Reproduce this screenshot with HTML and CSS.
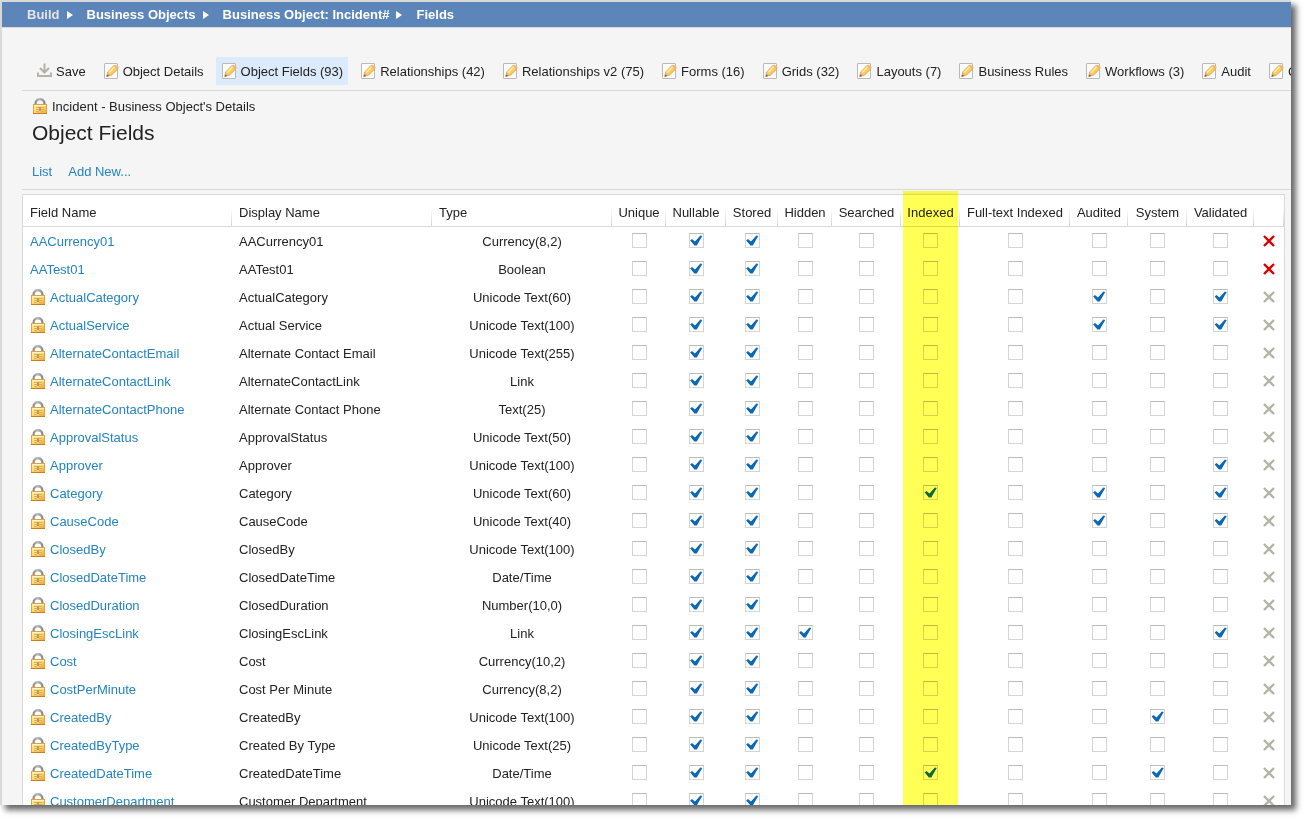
FILE: index.html
```html
<!DOCTYPE html>
<html lang="en">
<head>
    <meta charset="UTF-8">
    <meta name="viewport" content="width=device-width, initial-scale=1.0">
    <title>Business Object: Incident# - Fields</title>
    <link rel="stylesheet" href="styles.css">
</head>
<body>
    <!-- Shared icons -->
    <svg class="icon-defs" width="0" height="0" aria-hidden="true">
        <defs>
            <linearGradient id="brass" x1="0" y1="0" x2="1" y2="1">
                <stop offset="0" stop-color="#fff0a8"/>
                <stop offset="0.5" stop-color="#fcd871"/>
                <stop offset="1" stop-color="#eba63a"/>
            </linearGradient>
            <linearGradient id="steel" x1="0" y1="0" x2="1" y2="0">
                <stop offset="0" stop-color="#8e8e8e"/>
                <stop offset="0.4" stop-color="#bdbdbd"/>
                <stop offset="1" stop-color="#8a8a8a"/>
            </linearGradient>
        </defs>
        <symbol id="icon-save" viewBox="0 0 15 16">
            <path d="M7.5 0.5V10M3 5L7.5 9.5L12 5" fill="none" stroke="#b3b3a6" stroke-width="2"/>
            <path d="M1 9.5V13H14V9.5" fill="none" stroke="#b3b3a6" stroke-width="2"/>
        </symbol>
        <symbol id="icon-edit" viewBox="0 0 15 16">
            <rect x="0.5" y="0.5" width="13" height="15" rx="0.5" fill="#fbfbfb" stroke="#b9b9b9"/>
            <path d="M2.8 13.4L3.6 9.2L9.8 2.6L14 5.8L7.4 12.2Z" fill="#fbcb5c" stroke="#d59a4c" stroke-width="0.8"/>
            <path d="M5 9.6L10.8 3.7" stroke="#ffeb99" stroke-width="1.8"/>
            <path d="M3 13.3L3.6 9.7L6.9 12.2Z" fill="#e5b583"/>
            <path d="M2.5 13.8L3.2 11.4L5.2 12.9Z" fill="#6e5a46"/>
            <path d="M9.8 2.8L11.3 1.5L14.9 4.3L13.7 6Z" fill="#f2b673"/>
        </symbol>
        <symbol id="icon-lock" viewBox="0 0 14 16">
            <path d="M2.6 7.5V5.5C2.6 -0.2 11.4 -0.2 11.4 5.5V7.5" fill="none" stroke="url(#steel)" stroke-width="2.4"/>
            <rect x="0.5" y="6.5" width="13" height="9" fill="url(#brass)" stroke="#dfa047"/>
            <path d="M1 7.5H13" stroke="#fff3c0"/>
            <path d="M3 9.5H6M3 11.5H6M3 13.5H6M8 9.5H11M8 11.5H11M8 13.5H11" stroke="#e8b04c"/>
            <path d="M7 9V13" stroke="#8f856a" stroke-width="1.4"/>
            <path d="M0 15.5H14" stroke="#cc7b21"/>
        </symbol>
        <symbol id="icon-delete" viewBox="0 0 12 12">
            <path d="M1 1L11 11M11 1L1 11" fill="none" stroke="currentColor" stroke-width="2.4"/>
        </symbol>
    </svg>

    <div class="window">
        <nav class="breadcrumb" aria-label="Breadcrumb">
            <a class="root" href="#">Build</a>
            <a href="#">Business Objects</a>
            <a href="#">Business Object: Incident#</a>
            <a href="#">Fields</a>
        </nav>

        <main class="content">
            <div class="toolbar">
                <button type="button"><svg class="icon"><use href="#icon-save"/></svg>Save</button>
                <button type="button"><svg class="icon"><use href="#icon-edit"/></svg>Object Details</button>
                <button type="button" class="active"><svg class="icon"><use href="#icon-edit"/></svg>Object Fields (93)</button>
                <button type="button"><svg class="icon"><use href="#icon-edit"/></svg>Relationships (42)</button>
                <button type="button"><svg class="icon"><use href="#icon-edit"/></svg>Relationships v2 (75)</button>
                <button type="button"><svg class="icon"><use href="#icon-edit"/></svg>Forms (16)</button>
                <button type="button"><svg class="icon"><use href="#icon-edit"/></svg>Grids (32)</button>
                <button type="button"><svg class="icon"><use href="#icon-edit"/></svg>Layouts (7)</button>
                <button type="button"><svg class="icon"><use href="#icon-edit"/></svg>Business Rules</button>
                <button type="button"><svg class="icon"><use href="#icon-edit"/></svg>Workflows (3)</button>
                <button type="button"><svg class="icon"><use href="#icon-edit"/></svg>Audit</button>
                <button type="button"><svg class="icon"><use href="#icon-edit"/></svg>C</button>
            </div>

            <header class="page-header">
                <div class="object-name"><svg class="lock"><use href="#icon-lock"/></svg>Incident - Business Object's Details</div>
                <h1>Object Fields</h1>
                <div class="links">
                    <a href="#">List</a>
                    <a href="#">Add New...</a>
                </div>
            </header>

            <table class="fields">
                <colgroup>
                    <col>
                    <col class="col-display">
                    <col class="col-type">
                    <col class="col-unique">
                    <col class="col-nullable">
                    <col class="col-stored">
                    <col class="col-hidden">
                    <col class="col-searched">
                    <col class="col-indexed">
                    <col class="col-fulltext">
                    <col class="col-audited">
                    <col class="col-system">
                    <col class="col-validated">
                    <col class="col-delete">
                </colgroup>
                <thead>
                    <tr>
                        <th>Field Name</th>
                        <th>Display Name</th>
                        <th>Type</th>
                        <th class="flag">Unique</th>
                        <th class="flag">Nullable</th>
                        <th class="flag">Stored</th>
                        <th class="flag">Hidden</th>
                        <th class="flag">Searched</th>
                        <th class="flag highlight">Indexed</th>
                        <th class="flag">Full-text Indexed</th>
                        <th class="flag">Audited</th>
                        <th class="flag">System</th>
                        <th class="flag">Validated</th>
                        <th class="flag"></th>
                    </tr>
                </thead>
                <tbody id="fieldRows"></tbody>
            </table>
        </main>
    </div>

    <script>
        var flags = ['Unique', 'Nullable', 'Stored', 'Hidden', 'Searched', 'Indexed', 'Full-text Indexed', 'Audited', 'System', 'Validated'];

        // name, display name, type, flags set besides Nullable and Stored, custom (not locked)
        var fields = [
            ['AACurrency01', 'AACurrency01', 'Currency(8,2)', [], true],
            ['AATest01', 'AATest01', 'Boolean', [], true],
            ['ActualCategory', 'ActualCategory', 'Unicode Text(60)', ['Audited', 'Validated']],
            ['ActualService', 'Actual Service', 'Unicode Text(100)', ['Audited', 'Validated']],
            ['AlternateContactEmail', 'Alternate Contact Email', 'Unicode Text(255)', []],
            ['AlternateContactLink', 'AlternateContactLink', 'Link', []],
            ['AlternateContactPhone', 'Alternate Contact Phone', 'Text(25)', []],
            ['ApprovalStatus', 'ApprovalStatus', 'Unicode Text(50)', []],
            ['Approver', 'Approver', 'Unicode Text(100)', ['Validated']],
            ['Category', 'Category', 'Unicode Text(60)', ['Indexed', 'Audited', 'Validated']],
            ['CauseCode', 'CauseCode', 'Unicode Text(40)', ['Audited', 'Validated']],
            ['ClosedBy', 'ClosedBy', 'Unicode Text(100)', []],
            ['ClosedDateTime', 'ClosedDateTime', 'Date/Time', []],
            ['ClosedDuration', 'ClosedDuration', 'Number(10,0)', []],
            ['ClosingEscLink', 'ClosingEscLink', 'Link', ['Hidden', 'Validated']],
            ['Cost', 'Cost', 'Currency(10,2)', []],
            ['CostPerMinute', 'Cost Per Minute', 'Currency(8,2)', []],
            ['CreatedBy', 'CreatedBy', 'Unicode Text(100)', ['System']],
            ['CreatedByType', 'Created By Type', 'Unicode Text(25)', []],
            ['CreatedDateTime', 'CreatedDateTime', 'Date/Time', ['Indexed', 'System']],
            ['CustomerDepartment', 'Customer Department', 'Unicode Text(100)', []]
        ];

        var html = '';
        fields.forEach(function(field) {
            var set = ['Nullable', 'Stored'].concat(field[3]);
            var custom = field[4];
            html += '<tr><td><div class="name">';
            if (!custom) {
                html += '<svg class="lock"><use href="#icon-lock"/></svg>';
            }
            html += '<a href="#">' + field[0] + '</a></div></td>';
            html += '<td>' + field[1] + '</td><td class="type">' + field[2] + '</td>';
            flags.forEach(function(flag) {
                var checked = set.indexOf(flag) > -1 ? ' checked' : '';
                html += '<td class="flag"><input type="checkbox" aria-label="' + field[0] + ' ' + flag + '"' + checked + '></td>';
            });
            html += '<td class="action"><button type="button" class="delete" aria-label="Delete ' + field[0] + '"' + (custom ? '' : ' disabled') + '>';
            html += '<svg><use href="#icon-delete"/></svg></button></td></tr>';
        });
        document.getElementById('fieldRows').innerHTML = html;
    </script>
</body>
</html>
```
FILE: styles.css
```css
* { box-sizing: border-box; }
body { margin: 0; height: 100vh; padding: 0 15px 15px 0; overflow: hidden; background: #fff; color: #222; font-family: "Liberation Sans", Arial, sans-serif; font-size: 13px; line-height: 20px; }
a { color: #2484c0; text-decoration: none; }
a:hover { text-decoration: underline; }
button { font: inherit; color: inherit; background: none; border: none; padding: 0; cursor: pointer; }
svg { display: block; flex: none; }
.icon-defs { position: absolute; }
.icon { width: 15px; height: 16px; margin-bottom: 2px; }
.lock { width: 14px; height: 16px; margin-bottom: 2px; }

.window { height: 100%; overflow: hidden; background: #f5f5f5; border-top: 2px solid #d9d9d9; border-left: 2px solid #d9d9d9; box-shadow: 5px 5px 6px rgba(0, 0, 0, 0.6); }

/* Breadcrumb */
.breadcrumb { display: flex; height: 26px; padding-left: 25px; align-items: center; background: #5c86b9; border-bottom: 1px solid #d9d9d9; }
.breadcrumb a { display: flex; align-items: center; color: #fff; font-weight: bold; white-space: nowrap; }
.breadcrumb a.root { color: #e4e4e4; }
.breadcrumb a:not(:last-child)::after { content: ""; margin: 0 14px 0 7px; border-left: 6px solid #fff; border-top: 4px solid transparent; border-bottom: 4px solid transparent; }

.content { padding-left: 20px; }

/* Toolbar */
.toolbar { display: flex; gap: 7px; padding: 29px 0 5px 9px; overflow: hidden; border-bottom: 1px solid #d9d9d9; }
.toolbar button { display: flex; flex: none; align-items: center; gap: 4px; height: 28px; padding: 2px 5px 0 6px; white-space: nowrap; }
.toolbar button.active { background: #dcebfb; }

/* Page header */
.page-header { padding: 6px 0 7px 10px; border-bottom: 1px solid #d9d9d9; }
.object-name { display: flex; align-items: center; gap: 5px; padding-left: 1px; }
h1 { margin: 2px 0 15px; font-size: 21px; line-height: 28px; font-weight: normal; }
.links { display: flex; gap: 16px; }

/* Fields table */
.fields { width: calc(100% - 6px); margin-top: 4px; table-layout: fixed; border-collapse: separate; border-spacing: 0; background: #fff; border: 1px solid #d9d9d9; }
.fields th { position: relative; height: 32px; padding: 5px 0 0 7px; text-align: left; font-weight: normal; white-space: nowrap; border-bottom: 1px solid #d9d9d9; }
.fields th::after { content: ""; position: absolute; right: 0; bottom: 0; width: 1px; height: 18px; background: linear-gradient(#fff, #d4d4d4); }
.fields td { height: 28px; padding: 2px 0 0 7px; white-space: nowrap; }
.fields th.flag { padding-left: 0; text-align: center; }
.fields td.flag { padding: 0 0 1px; }
.fields td.type { padding-left: 0; text-align: center; }
.fields td.action { padding: 0; }
.name { display: flex; align-items: center; gap: 5px; }
.name .lock { margin-left: 1px; }

/* Marker drawn down the whole Indexed column */
.highlight::before { content: ""; position: absolute; z-index: 1; top: -4px; left: 2px; right: 2px; height: 100vh; background: #ffff55; mix-blend-mode: multiply; pointer-events: none; }

.col-display { width: 200px; }
.col-type { width: 180px; }
.col-unique { width: 54px; }
.col-nullable { width: 60px; }
.col-stored { width: 52px; }
.col-hidden { width: 54px; }
.col-searched { width: 69px; }
.col-indexed { width: 59px; }
.col-fulltext { width: 110px; }
.col-audited { width: 58px; }
.col-system { width: 59px; }
.col-validated { width: 67px; }
.col-delete { width: 30px; }

input[type="checkbox"] { display: block; appearance: none; width: 15px; height: 15px; margin: 0 auto; background: #fff; border: 1px solid #d4d4d4; border-top-color: #bbb; }
input[type="checkbox"]:checked::before { content: ""; display: block; width: 13px; height: 13px; background: #0a68b4; clip-path: polygon(5% 50%, 19% 39%, 42% 57%, 84% 12%, 98% 16%, 56% 88%, 38% 88%); }

.delete { display: block; margin: 0 auto; color: #dc0000; }
.delete:disabled { color: #b3b3a6; cursor: default; }
.delete svg { width: 12px; height: 12px; }
```
